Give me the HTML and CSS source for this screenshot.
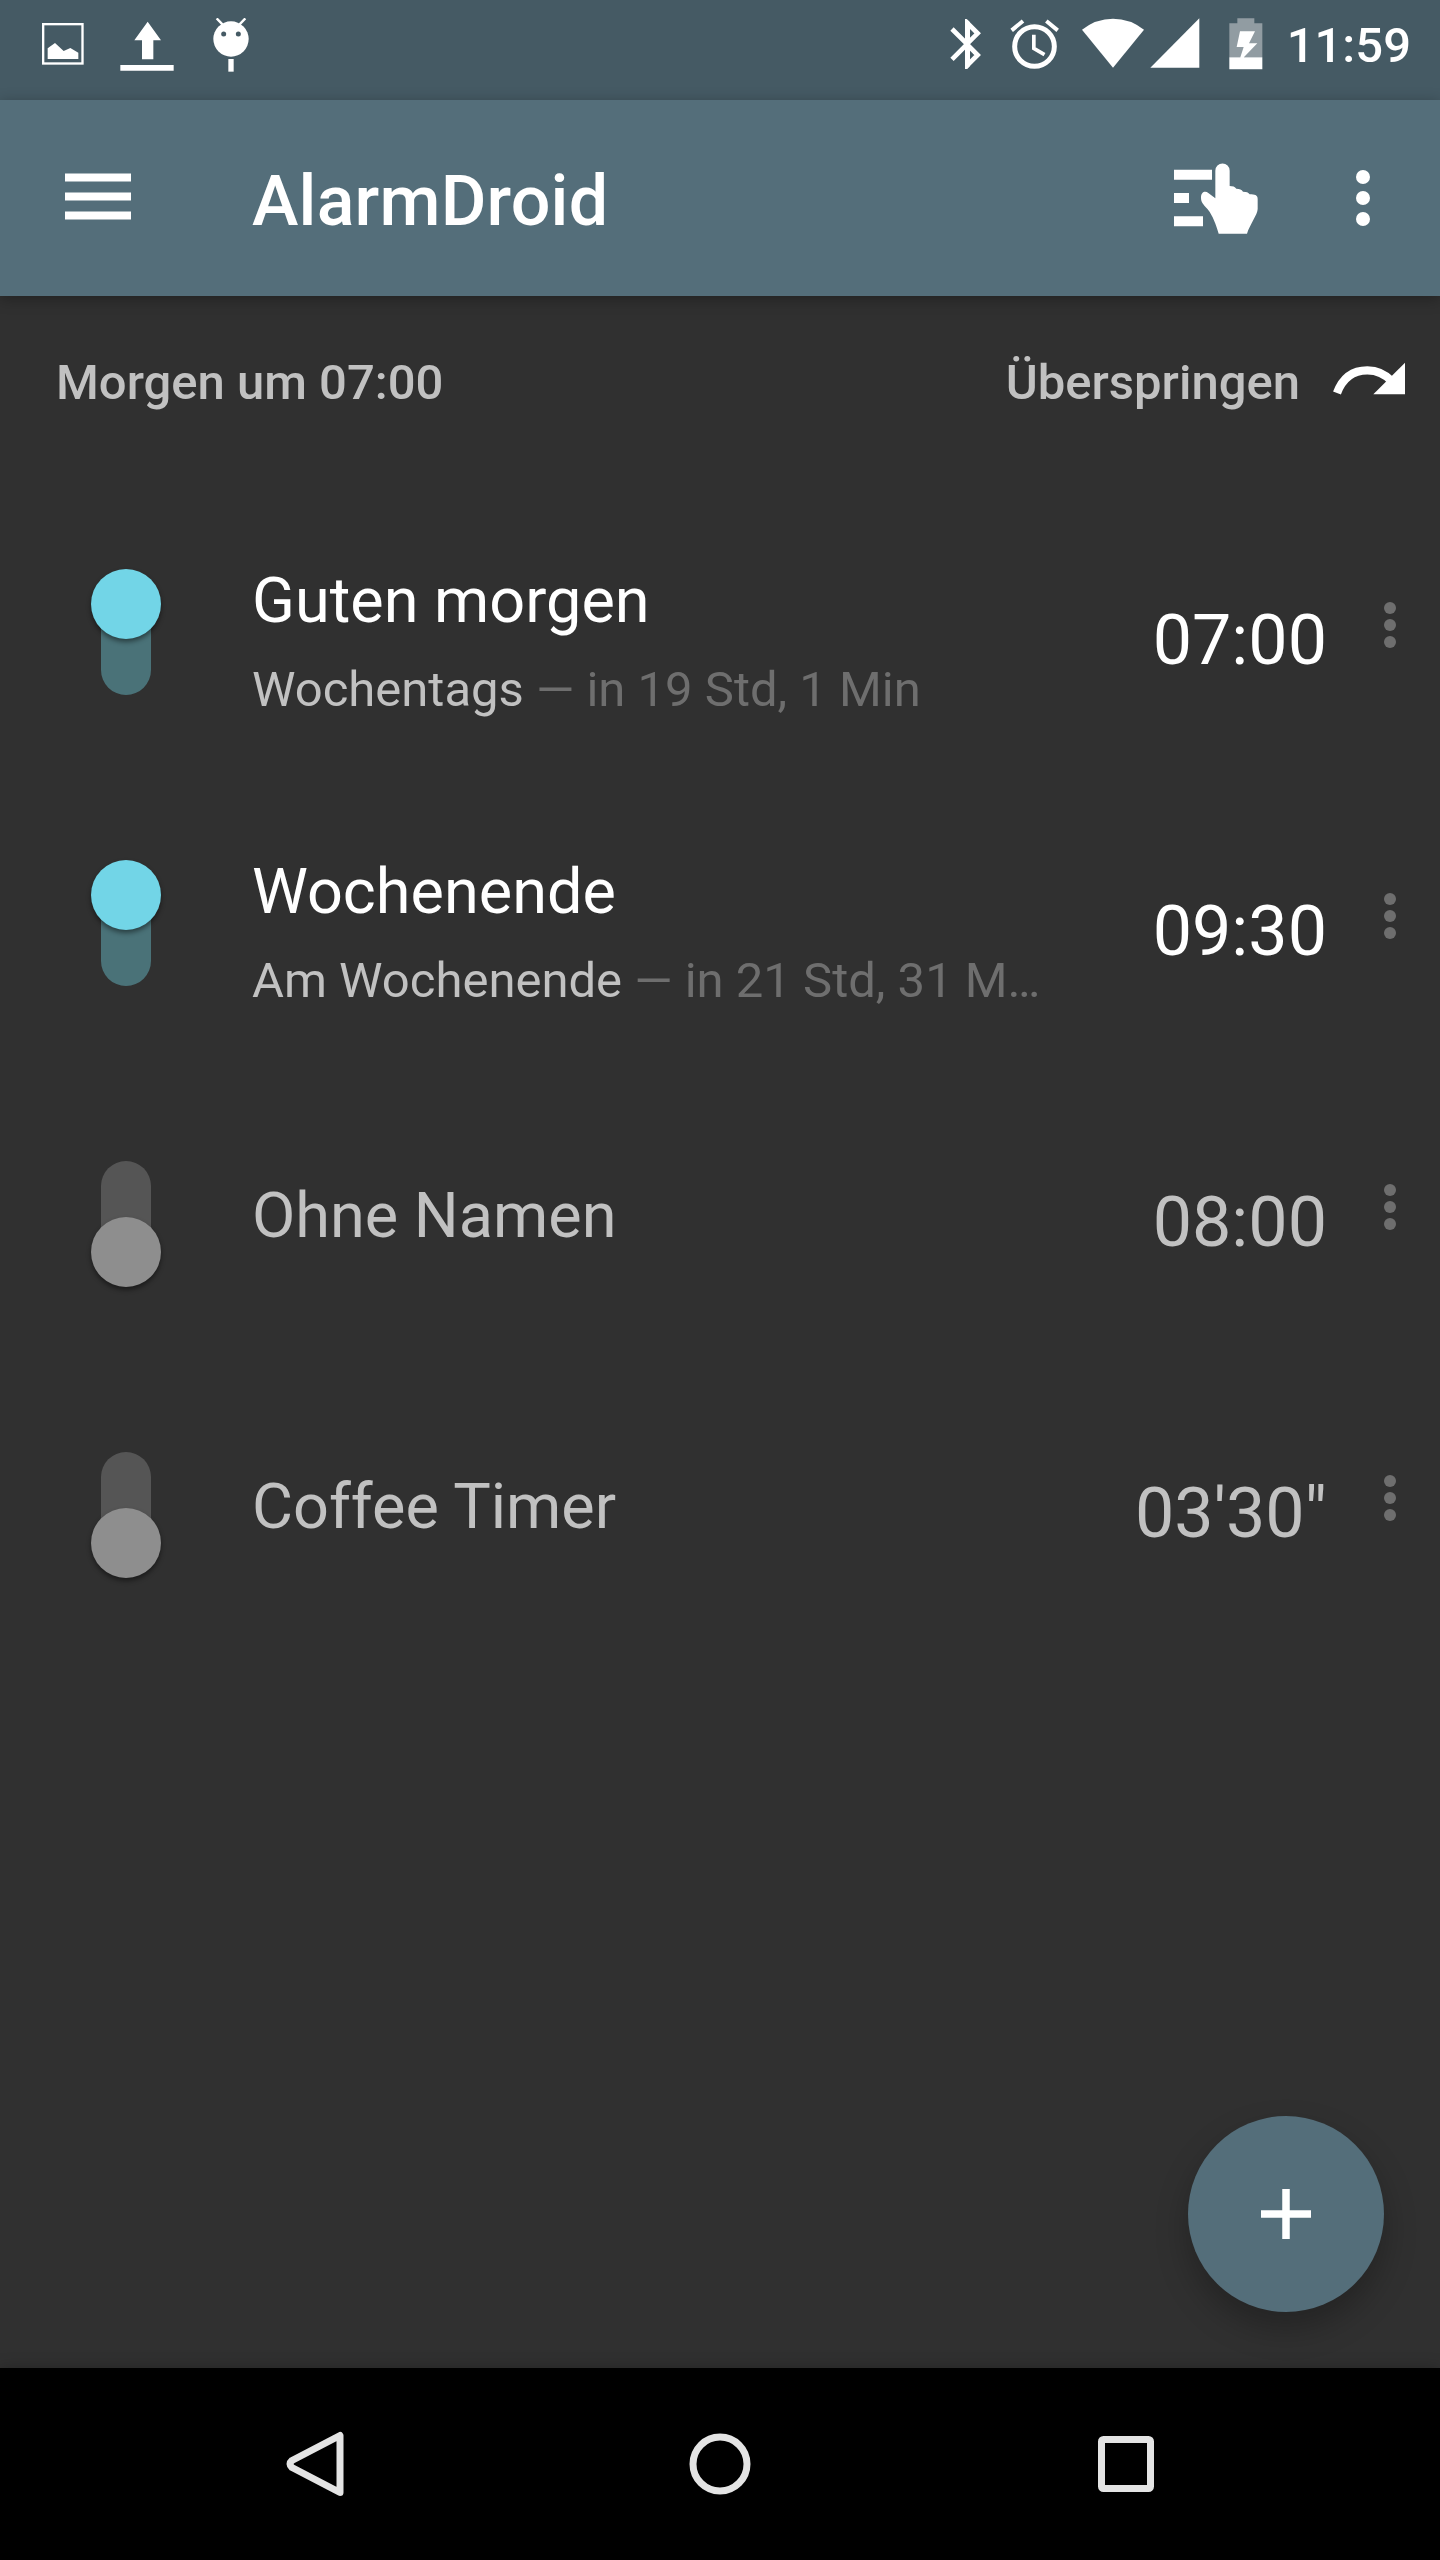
FILE: index.html
```html
<!DOCTYPE html>
<html lang="de">
<head>
    <meta charset="UTF-8">
    <meta name="viewport" content="width=device-width, initial-scale=1.0">
    <title>AlarmDroid</title>
    <link rel="stylesheet" href="styles.css">
</head>
<body>
    <div class="screen">
        <div class="status-bar">
            <div class="notifications">
                <svg width="42" height="42" viewBox="126 69 126 126">
                    <rect x="129.500" y="72.500" width="118" height="118" fill="none" stroke="#fff" stroke-width="7"/>
                    <path fill="#fff" d="M143 177v-32l22-16 26 24 20-9 24 14v19z"/>
                </svg>
                <svg width="54" height="50" viewBox="360 63 162 150">
                    <path fill="#fff" d="M443 65l40 56h-23v57h-34v-57h-23zM361 195h160v17H361z"/>
                </svg>
                <svg width="36" height="54" viewBox="639 54 108 162">
                    <path stroke="#fff" stroke-width="7" d="M650 55l18 19M736 55l-18 19"/>
                    <circle cx="693" cy="117" r="53" fill="#fff"/>
                    <circle cx="671" cy="102" r="7.500" fill="#455a64"/>
                    <circle cx="715" cy="102" r="7.500" fill="#455a64"/>
                    <path fill="#fff" d="M685 177h16v38h-16z"/>
                </svg>
            </div>
            <div class="system">
                <svg class="bluetooth" width="32" height="50" viewBox="60 58 96 150">
                    <path fill="none" stroke="#fff" stroke-width="14" d="M66 88l45 45 32-32-31-31v127l31-31-32-32-45 45" />
                    <path fill="#fff" d="M105 60h7l8 8v131l-8 8h-7z"/>
                </svg>
                <svg class="alarm" width="49" height="50" viewBox="240 58 147 150">
                    <circle cx="313.500" cy="140.500" r="59.500" fill="none" stroke="#fff" stroke-width="15"/>
                    <path fill="none" stroke="#fff" stroke-width="12" d="M245 92l34-28M383 92l-34-28"/>
                    <path fill="none" stroke="#fff" stroke-width="11" d="M311.500 105v41l32 19"/>
                </svg>
                <svg class="wifi" width="62" height="50" viewBox="456 55 186 150">
                    <path fill="#fff" d="M549 204L456 90Q498 57 549 57T642 90z"/>
                </svg>
                <svg class="signal" width="50" height="50" viewBox="659 55 150 150">
                    <path fill="#fff" d="M807 56v148H660z"/>
                </svg>
                <svg class="battery" width="34" height="52" viewBox="896 53 102 156">
                    <path fill="#919ca2" d="M921 54h51v15h24v102H897V69h24z"/>
                    <path fill="#fff" d="M897 171h99v36h-99zM929 93h45l-18 36h25l-42 43-9-1 10-31h-21z"/>
                </svg>
                <span class="clock">11:59</span>
            </div>
        </div>

        <div class="app-bar">
            <svg class="menu" width="66" height="48" viewBox="0 0 66 48">
                <path fill="#fff" d="M0 1.500h66v8H0zM0 20.500h66v8H0zM0 39.500h66v8H0z"/>
            </svg>
            <h1>AlarmDroid</h1>
            <svg class="choose" width="84" height="72" viewBox="582 190 252 216">
                <path fill="#fff" d="M582 210h114v30H582zM582 280h45v30h-45zM582 350h87v30h-87z"/>
                <path fill="#fff" d="M706 296v-83a21 21 0 0 1 43 0v46c9 0 16 2 20 8 10 0 16 2 20 9 10 0 17 2 20 8 15 0 24 2 24 14v30c0 16-24 48-32 74h-85c-8-26-17-53-33-73-14-16-20-21-20-35 0-18 13-22 22-14z"/>
            </svg>
            <svg class="more" width="14" height="56" viewBox="0 0 14 56">
                <g fill="#fff"><circle cx="7" cy="7" r="7"/><circle cx="7" cy="28" r="7"/><circle cx="7" cy="49" r="7"/></g>
            </svg>
        </div>

        <div class="next-alarm">
            <span>Morgen um 07:00</span>
            <span class="skip">Überspringen</span>
            <svg width="73" height="34" viewBox="1060 786 219 102">
                <path fill="none" stroke="#fff" stroke-width="25" d="M1072 879C1092 825 1127 811 1163 811Q1206 811 1237 844"/>
                <path fill="#fff" d="M1276 788v95h-95z"/>
            </svg>
        </div>

        <div class="alarm-list">
            <div class="alarm-row on">
                <div class="switch"><div class="thumb"></div></div>
                <div class="info">
                    <div class="name">Guten morgen</div>
                    <div class="detail"><span>Wochentags</span> — in 19 Std, 1 Min</div>
                </div>
                <div class="time">07:00</div>
                <svg class="row-more" width="12" height="46" viewBox="0 0 12 46">
                    <g fill="#6e6e6e"><circle cx="6" cy="6" r="6"/><circle cx="6" cy="23" r="6"/><circle cx="6" cy="40" r="6"/></g>
                </svg>
            </div>
            <div class="alarm-row on">
                <div class="switch"><div class="thumb"></div></div>
                <div class="info">
                    <div class="name">Wochenende</div>
                    <div class="detail"><span>Am Wochenende</span> — in 21 Std, 31 Min</div>
                </div>
                <div class="time">09:30</div>
                <svg class="row-more" width="12" height="46" viewBox="0 0 12 46">
                    <g fill="#6e6e6e"><circle cx="6" cy="6" r="6"/><circle cx="6" cy="23" r="6"/><circle cx="6" cy="40" r="6"/></g>
                </svg>
            </div>
            <div class="alarm-row">
                <div class="switch"><div class="thumb"></div></div>
                <div class="info single">
                    <div class="name">Ohne Namen</div>
                </div>
                <div class="time">08:00</div>
                <svg class="row-more" width="12" height="46" viewBox="0 0 12 46">
                    <g fill="#6e6e6e"><circle cx="6" cy="6" r="6"/><circle cx="6" cy="23" r="6"/><circle cx="6" cy="40" r="6"/></g>
                </svg>
            </div>
            <div class="alarm-row">
                <div class="switch"><div class="thumb"></div></div>
                <div class="info single">
                    <div class="name">Coffee Timer</div>
                </div>
                <div class="time">03'30"</div>
                <svg class="row-more" width="12" height="46" viewBox="0 0 12 46">
                    <g fill="#6e6e6e"><circle cx="6" cy="6" r="6"/><circle cx="6" cy="23" r="6"/><circle cx="6" cy="40" r="6"/></g>
                </svg>
            </div>
        </div>

        <button class="fab" aria-label="Neuer Alarm">
            <svg width="50" height="50" viewBox="0 0 50 50">
                <path fill="#fff" d="M21.250 0h7.500v21.250H50v7.500H28.750V50h-7.500V28.750H0v-7.500h21.250z"/>
            </svg>
        </button>

        <div class="nav-bar">
            <svg width="58" height="68" viewBox="0 0 58 68">
                <path fill="none" stroke="#e4e4e4" stroke-width="7" stroke-linejoin="round" d="M54 5.500v57L6 37.500q-4-3.500 0-7z"/>
            </svg>
            <svg width="62" height="62" viewBox="0 0 62 62">
                <circle cx="31" cy="31" r="27" fill="none" stroke="#e4e4e4" stroke-width="7"/>
            </svg>
            <svg class="recents" width="56" height="56" viewBox="0 0 56 56">
                <rect x="3.500" y="3.500" width="49" height="49" rx="2" fill="none" stroke="#e4e4e4" stroke-width="7"/>
            </svg>
        </div>
    </div>
</body>
</html>
```
FILE: styles.css
```css
body {
    margin: 0;
    font-family: Roboto, sans-serif;
    background-color: #303030;
    color: #fff;
}
svg {
    display: block;
    flex: none;
}
.screen {
    position: relative;
    display: flex;
    flex-direction: column;
    width: 1440px;
    height: 2560px;
    overflow: hidden;
}
.status-bar {
    display: flex;
    justify-content: space-between;
    height: 100px;
    padding: 0 29px 0 42px;
    box-sizing: border-box;
    background-color: #455a64;
}
.notifications {
    display: flex;
    align-items: flex-start;
    gap: 39px;
    padding-top: 18px;
}
.notifications svg:first-child {
    margin: 5px -3px 0 0;
}
.notifications svg:nth-child(2) {
    margin-top: 3px;
}
.system {
    display: flex;
    align-items: flex-start;
    padding-top: 18px;
}
.bluetooth, .alarm {
    margin: 1px 28px 0 0;
}
.wifi {
    margin-right: 6px;
    margin-left: -5px;
}
.signal {
    margin-right: 29px;
}
.battery {
    margin-right: 24px;
}
.clock {
    font-size: 49px;
    font-weight: 500;
    line-height: 56px;
}
.app-bar {
    display: flex;
    align-items: center;
    height: 196px;
    padding: 0 70px 0 65px;
    box-sizing: border-box;
    background-color: #546e7a;
    box-shadow: 0 3px 14px rgba(0, 0, 0, 0.3);
}
.menu {
    margin: -4px 121px 0 0;
}
.app-bar h1 {
    flex: 1;
    margin: 6px 0 0;
    font-size: 70px;
    font-weight: 500;
    letter-spacing: 0.2px;
    line-height: 82px;
}
.choose {
    margin: 2px 98px 0 0;
}
.next-alarm {
    display: flex;
    align-items: center;
    height: 196px;
    padding: 0 34px 23px 56px;
    box-sizing: border-box;
    color: #c1c1c1;
    font-size: 49px;
    font-weight: 500;
    line-height: 58px;
}
.skip {
    margin: 0 33px 0 auto;
}
.next-alarm svg {
    margin-top: -8px;
}
.alarm-row {
    display: flex;
    align-items: center;
    height: 291px;
    padding: 0 44px 0 101px;
    box-sizing: border-box;
    color: #c1c1c1;
}
.switch {
    display: flex;
    flex: none;
    justify-content: center;
    align-items: flex-end;
    width: 50px;
    height: 116px;
    margin: 0 101px 1px 0;
    border-radius: 25px;
    background-color: #555;
}
.thumb {
    flex: none;
    width: 70px;
    height: 70px;
    margin: -10px 0;
    border-radius: 50%;
    background-color: #8e8e8e;
    box-shadow: 0 3px 5px rgba(0, 0, 0, 0.45);
}
.on .switch {
    align-items: flex-start;
    background-color: #4a7278;
}
.on .thumb {
    background-color: #72d5e7;
}
.info {
    width: 794px;
    padding-top: 7px;
}
.info.single {
    padding: 0 0 8px;
}
.name {
    font-size: 63px;
    line-height: 74px;
}
.detail {
    margin-top: 23px;
    overflow: hidden;
    color: #6e6e6e;
    font-size: 49px;
    line-height: 58px;
    white-space: nowrap;
    text-overflow: ellipsis;
}
.detail span {
    color: #c1c1c1;
}
.on .name, .on .time {
    color: #fff;
}
.time {
    margin: 4px 57px 0 auto;
    font-size: 70px;
    line-height: 82px;
}
.row-more {
    margin-top: -26px;
}
.fab {
    position: absolute;
    right: 56px;
    bottom: 248px;
    display: flex;
    align-items: center;
    justify-content: center;
    width: 196px;
    height: 196px;
    padding: 0;
    border: none;
    border-radius: 50%;
    background-color: #546e7a;
    box-shadow: 0 16px 32px rgba(0, 0, 0, 0.26);
}
.nav-bar {
    display: grid;
    grid-template-columns: repeat(3, 405px);
    justify-content: center;
    justify-items: center;
    align-items: center;
    height: 192px;
    margin-top: auto;
    background-color: #000;
    box-shadow: 0 0 14px rgba(0, 0, 0, 0.25);
}
.recents {
    margin-left: 1px;
}
```
